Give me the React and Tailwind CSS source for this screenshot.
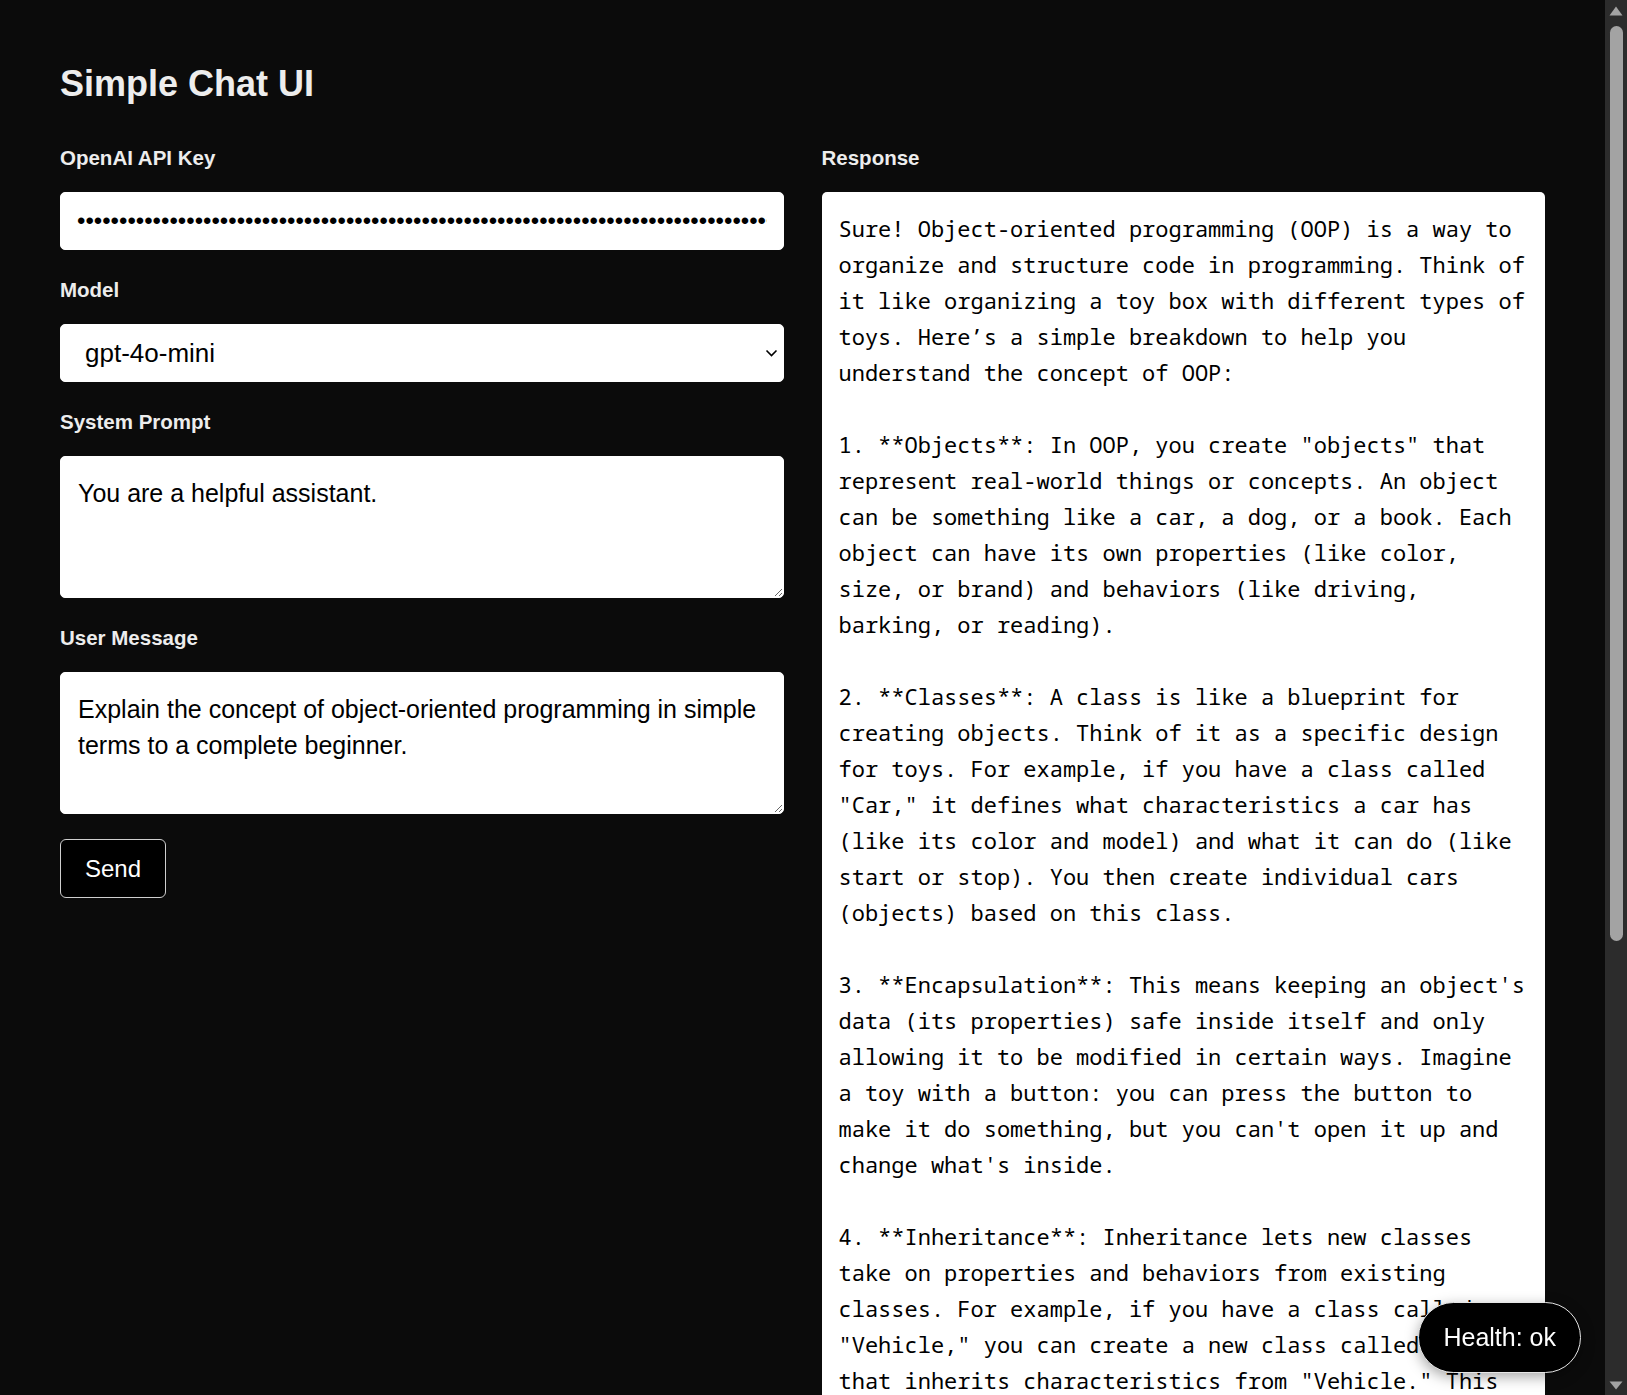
import { useState } from "react";

const RESPONSE = [
  "Sure! Object-oriented programming (OOP) is a way to organize and structure code in programming. Think of it like organizing a toy box with different types of toys. Here’s a simple breakdown to help you understand the concept of OOP:",
  '1. **Objects**: In OOP, you create "objects" that represent real-world things or concepts. An object can be something like a car, a dog, or a book. Each object can have its own properties (like color, size, or brand) and behaviors (like driving, barking, or reading).',
  '2. **Classes**: A class is like a blueprint for creating objects. Think of it as a specific design for toys. For example, if you have a class called "Car," it defines what characteristics a car has (like its color and model) and what it can do (like start or stop). You then create individual cars (objects) based on this class.',
  "3. **Encapsulation**: This means keeping an object's data (its properties) safe inside itself and only allowing it to be modified in certain ways. Imagine a toy with a button: you can press the button to make it do something, but you can't open it up and change what's inside.",
  '4. **Inheritance**: Inheritance lets new classes take on properties and behaviors from existing classes. For example, if you have a class called "Vehicle," you can create a new class called "Truck" that inherits characteristics from "Vehicle." This means a Truck has wheels and an engine just like any vehicle, but it can also have its own special features, like a big cargo bed.',
  '5. **Polymorphism**: This is a fancy word that means "many shapes." It allows different objects to respond to the same action in their own way. For example, if you tell a dog and a cat to "speak," the dog barks and the cat meows.',
  "In summary, OOP helps you organize your code by grouping related data and actions into objects, making it easier to understand, reuse, and manage. It's like keeping your toys neatly sorted so you can find and play with them more easily!",
].join("\n\n");

function Field({ label, children }) {
  return (
    <div>
      <label className="block text-[20.5px] leading-[30px] font-semibold mb-[19px]">{label}</label>
      {children}
    </div>
  );
}

// page scrollbar as it shows in the capture (dark theme)
function Scrollbar() {
  return (
    <div className="w-[22px] shrink-0 h-full bg-[#2c2c2c] flex flex-col items-center">
      <svg className="mt-[6px] shrink-0" width="14" height="10" viewBox="0 0 14 10">
        <path d="M7 0.5 L13.5 9.5 L0.5 9.5 Z" fill="#a3a3a3" />
      </svg>
      <div className="mt-[10px] w-[13px] h-[915px] shrink-0 rounded-full bg-[#a3a3a3]" />
      <div className="flex-1" />
      <svg className="mb-[5px] shrink-0" width="14" height="9" viewBox="0 0 14 9">
        <path d="M0.5 0.5 L13.5 0.5 L7 8.5 Z" fill="#a3a3a3" />
      </svg>
    </div>
  );
}

export default function App() {
  const [apiKey] = useState("sk-proj-" + "x".repeat(156));
  const [model, setModel] = useState("gpt-4o-mini");
  const [system, setSystem] = useState("You are a helpful assistant.");
  const [message, setMessage] = useState(
    "Explain the concept of object-oriented programming in simple terms to a complete beginner."
  );

  const control =
    "block w-full bg-white text-black rounded-[5px] border border-white [color-scheme:light] outline-none";

  return (
    <div className="flex h-screen overflow-hidden bg-[#0b0b0b] text-[#ededed] font-['Liberation_Sans',Arial,sans-serif]">
      <main className="flex-1 min-w-0 overflow-hidden px-[60px] pt-[62px] pb-[60px]">
        <h1 className="text-[36px] leading-[43px] font-bold">Simple Chat UI</h1>

        <div className="mt-[38px] grid grid-cols-2 gap-x-[38px] items-start">
          {/* Form */}
          <div className="flex flex-col gap-[25px]">
            <Field label="OpenAI API Key">
              <input type="password" readOnly value={apiKey} className={`${control} text-[24px] h-[58px] px-[16px]`} />
            </Field>

            <Field label="Model">
              <div className="relative">
                <select
                  value={model}
                  onChange={(e) => setModel(e.target.value)}
                  className={`${control} text-[26px] h-[58px] pl-[24px] pr-[30px] appearance-none`}
                >
                  <option>gpt-4o-mini</option>
                  <option>gpt-4o</option>
                  <option>gpt-4.1</option>
                </select>
                <svg
                  className="absolute right-[6px] top-1/2 -translate-y-1/2 pointer-events-none"
                  width="13"
                  height="8"
                  viewBox="0 0 13 8"
                  fill="none"
                  stroke="black"
                  strokeWidth="1.6"
                >
                  <path d="M1.5 1.5 L6.5 6.5 L11.5 1.5" />
                </svg>
              </div>
            </Field>

            <Field label="System Prompt">
              <textarea
                value={system}
                onChange={(e) => setSystem(e.target.value)}
                className={`${control} text-[25px] h-[142px] px-[17px] pt-[18px] pb-[16px] leading-[36px] resize-y`}
              />
            </Field>

            <Field label="User Message">
              <textarea
                value={message}
                onChange={(e) => setMessage(e.target.value)}
                className={`${control} text-[25px] h-[142px] px-[17px] pt-[18px] pb-[16px] leading-[36px] resize-y`}
              />
            </Field>

            <div>
              <button className="h-[59px] px-[24px] bg-black text-white text-[24px] rounded-[6px] border border-[#cfcfcf]">
                Send
              </button>
            </div>
          </div>

          {/* Response */}
          <div>
            <label className="block text-[20.5px] leading-[30px] font-semibold mb-[19px]">Response</label>
            <div className="bg-white text-black rounded-[5px] pt-[18px] pb-[18px] px-[17px] text-[22px] leading-[36px] whitespace-pre-wrap font-['Noto_Sans_Mono','DejaVu_Sans_Mono',monospace]">
              {RESPONSE}
            </div>
          </div>
        </div>
      </main>

      <Scrollbar />

      <div className="fixed right-[46px] bottom-[22px] h-[71px] px-[24px] flex items-center rounded-full bg-black text-white text-[25px] border border-[#e5e5e5] shadow-[0_4px_14px_rgba(0,0,0,0.35)]">
        Health: ok
      </div>
    </div>
  );
}
